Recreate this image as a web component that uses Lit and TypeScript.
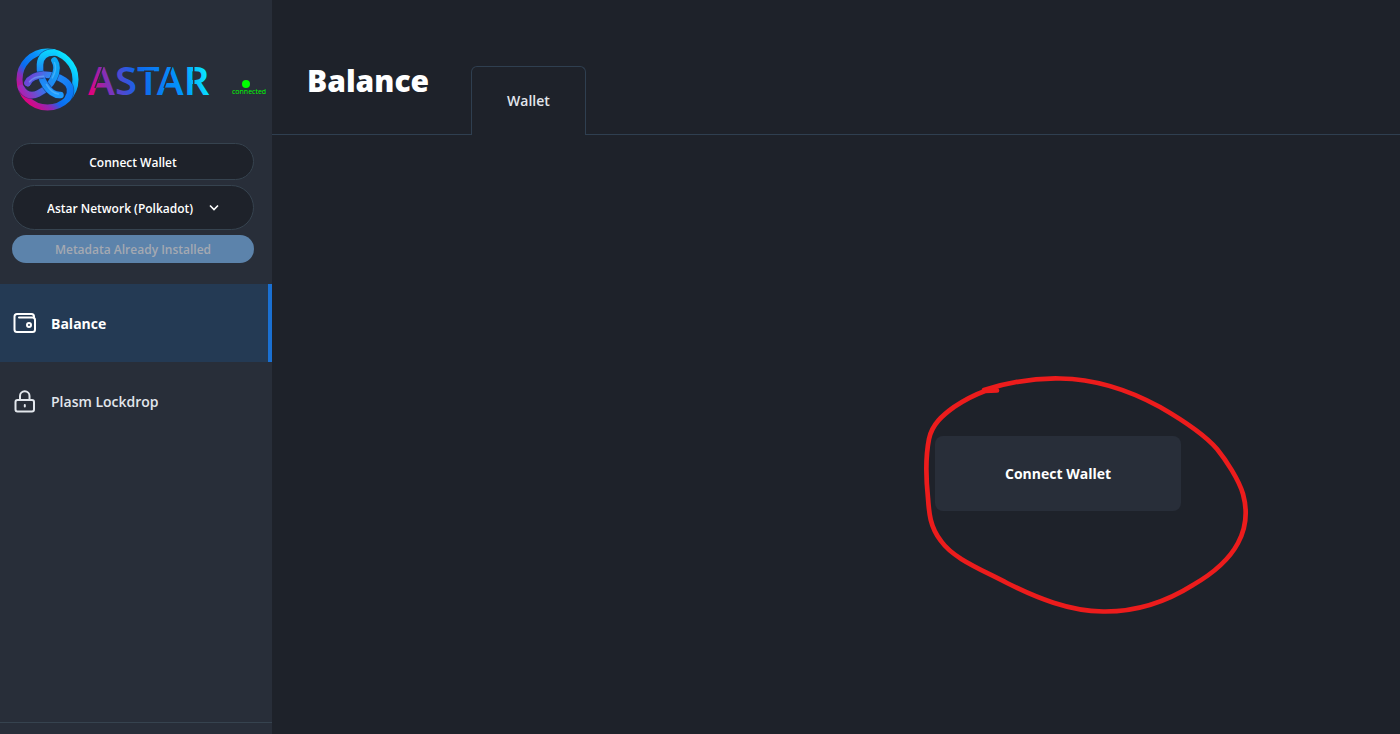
import { LitElement, html, svg, css } from "lit";
import { customElement } from "lit/decorators.js";

const STRAND = "M13 15.500C7 16 2 12 -2 6C-6 0 -8 -8 -7.500 -15C-7 -23 -2 -27 6 -27";
const TIP = "M13 15.500C7 16 2 12 -2 6";
const STRANDS = [
  { id: "violet", turn: 120 },
  { id: "pink", turn: 240 },
  { id: "cyan", turn: 0 },
];

@customElement("astar-logo")
class AstarLogo extends LitElement {
  static styles = css`
    :host { display: block; }
    svg { display: block; }
    .word { font: 600 40px "Noto Sans", "Open Sans", sans-serif; }
  `;
  render() {
    return html`<svg width="204" height="68" viewBox="0 0 204 68" role="img" aria-label="Astar">
      <defs>
        <linearGradient id="ring" x1="12" y1="56" x2="56" y2="14" gradientUnits="userSpaceOnUse">
          <stop offset="0" stop-color="#e6007a" /><stop offset=".25" stop-color="#8a2ab8" /><stop offset=".4" stop-color="#0a6cf0" /><stop offset=".65" stop-color="#0a8cfa" /><stop offset="1" stop-color="#0ae2ff" />
        </linearGradient>
        <linearGradient id="cyan" x1="0" y1="16" x2="0" y2="-28" gradientUnits="userSpaceOnUse">
          <stop offset="0" stop-color="#1c9cff" /><stop offset=".5" stop-color="#1f7cf0" /><stop offset="1" stop-color="#0ad2ff" />
        </linearGradient>
        <linearGradient id="violet" x1="0" y1="16" x2="0" y2="-28" gradientUnits="userSpaceOnUse">
          <stop offset="0" stop-color="#6b48d8" /><stop offset=".4" stop-color="#2a8cf5" /><stop offset="1" stop-color="#0a78f5" />
        </linearGradient>
        <linearGradient id="pink" x1="0" y1="16" x2="0" y2="-28" gradientUnits="userSpaceOnUse">
          <stop offset="0" stop-color="#0aa8f5" /><stop offset=".5" stop-color="#2a7cf0" /><stop offset="1" stop-color="#a624b4" />
        </linearGradient>
        <linearGradient id="word" x1="78" y1="50" x2="192" y2="24" gradientUnits="userSpaceOnUse">
          <stop offset="0" stop-color="#e6007a" /><stop offset=".2" stop-color="#703ac2" /><stop offset=".42" stop-color="#1066eb" /><stop offset=".8" stop-color="#0297fb" /><stop offset="1" stop-color="#0ae2ff" />
        </linearGradient>
      </defs>
      <circle cx="35.500" cy="34.500" r="28" fill="none" stroke="url(#ring)" stroke-width="6" />
      <g transform="translate(35.500 34.500)" fill="none" stroke-linecap="round">
        ${STRANDS.map(
          (s) => svg`<g transform="rotate(${s.turn})">
            <path d=${STRAND} stroke="#17306e" stroke-opacity=".6" stroke-width="8" stroke-linecap="butt" />
            <path d=${STRAND} stroke="url(#${s.id})" stroke-width="6.500" />
          </g>`
        )}
        <g transform="rotate(120)">
          <path d=${TIP} stroke="#17306e" stroke-opacity=".6" stroke-width="8" stroke-linecap="butt" />
          <path d=${TIP} stroke="url(#violet)" stroke-width="6.500" />
        </g>
        ${STRANDS.map(
          (s) => svg`<path transform="rotate(${s.turn})" d="M11 14.500C6 14 2 10 -1 5" stroke="#7fd0ff" stroke-opacity=".4" stroke-width="1.500" />`
        )}
      </g>
      <text class="word" x="76" y="50" fill="url(#word)">ASTAR</text>
      <path d="M83 43L91.500 20M132 26.300H142M152 43L160.500 20M181.700 20V51" stroke="#282e39" stroke-width="1.500" fill="none" />
    </svg>`;
  }
}

@customElement("app-root")
class AppRoot extends LitElement {
  static styles = css`
    :host {
      display: grid;
      grid-template-columns: 272px 1fr;
      min-height: 100vh;
      background: #1e222a;
      color: #fff;
      font: 600 14px/20px "Open Sans", "Noto Sans", sans-serif;
    }
    *, *::before { box-sizing: border-box; }
    button, select { font: inherit; color: inherit; cursor: pointer; }
    a { color: inherit; text-decoration: none; }
    .side { display: flex; flex-direction: column; background: #282e39; }
    .brand { display: flex; align-items: flex-end; padding: 45px 4px 30px 12px; }
    .status { display: flex; flex-direction: column; margin: 0 0 17px 16px; color: #0f0; font: 400 7px/8px "Open Sans", sans-serif; }
    .dot { width: 8px; height: 8px; margin-left: 10px; border-radius: 50%; background: #0f0; }
    .wallet { display: flex; flex-direction: column; gap: 5px; padding: 0 18px 21px 12px; font-size: 12px; }
    .pill { width: 100%; height: 37px; padding: 2px 6px 0; border: 1px solid #36434f; border-radius: 24px; background: #1e222a; text-align: center; }
    .network { display: grid; align-items: center; }
    .network > * { grid-area: 1 / 1; }
    .network select { appearance: none; height: 45px; padding: 2px 56px 0 34px; text-align: left; }
    .network svg { justify-self: end; margin-right: 34px; pointer-events: none; }
    .pill.meta { height: 28px; border: 0; background: #5c83ab; color: #a4a9b2; cursor: default; }
    .nav { display: flex; flex-direction: column; flex: 1; }
    .item { display: flex; align-items: center; gap: 14px; height: 78px; padding: 2px 13px 0; border-right: 4px solid transparent; color: #e2e6ec; }
    .item.active { background: #243a54; border-color: #1a70d2; color: #fff; font-weight: 700; }
    .foot { height: 12px; border-top: 1px solid #36434f; }
    .main { display: flex; flex-direction: column; min-width: 0; }
    .head { display: flex; align-items: flex-end; gap: 42px; padding: 60px 35px 0; border-bottom: 1px solid #2f3f50; }
    h1 { margin: 0 0 32px; font-size: 30px; line-height: 42px; font-weight: 800; }
    .tab { display: grid; place-items: center; height: 69px; padding: 0 35px; margin-bottom: -1px; border: 1px solid #2f3f50; border-bottom: 0; border-radius: 6px 6px 0 0; background: #1e222a; color: #e2e6ec; }
    .content { display: grid; place-items: center; flex: 1; padding: 78px 0 0 444px; }
    .callout { position: relative; }
    .connect { display: block; width: 246px; height: 75px; border: 0; border-radius: 8px; background: #282e39; font-weight: 700; }
    .mark { position: absolute; left: -25px; top: -71px; pointer-events: none; }
  `;
  render() {
    return html`
      <aside class="side">
        <div class="brand">
          <astar-logo></astar-logo>
          <div class="status"><i class="dot"></i><span>connected</span></div>
        </div>
        <div class="wallet">
          <button class="pill">Connect Wallet</button>
          <div class="network">
            <select class="pill" aria-label="Network"><option>Astar Network (Polkadot)</option></select>
            <svg width="12" height="12" viewBox="0 0 12 12" fill="none" stroke="#fff" stroke-width="1.600"><path d="M2 3.500L6 7.500L10 3.500" /></svg>
          </div>
          <button class="pill meta" disabled>Metadata Already Installed</button>
        </div>
        <nav class="nav">
          <a class="item active" href="#balance">
            <svg width="24" height="24" viewBox="0 0 24 24" fill="none" stroke="currentColor" stroke-width="2" stroke-linecap="round" stroke-linejoin="round">
              <path d="M21 5.500V4.500Q21 2 18.500 2H4Q1.500 2 1.500 4.500V17.500Q1.500 20 4 20H19.500Q22 20 22 17.500V8Q22 5.500 19.500 5.500H6" />
              <circle cx="16" cy="13" r="2" />
            </svg>
            <span>Balance</span>
          </a>
          <a class="item" href="#lockdrop">
            <svg width="24" height="24" viewBox="0 0 24 24" fill="none" stroke="currentColor" stroke-width="2" stroke-linecap="round" stroke-linejoin="round">
              <rect x="2.500" y="10" width="18.500" height="11.500" rx="2" />
              <path d="M7 10V6A4.700 4.700 0 0 1 16.500 6V10M11.800 15V16.500" />
            </svg>
            <span>Plasm Lockdrop</span>
          </a>
        </nav>
        <div class="foot"></div>
      </aside>
      <main class="main">
        <header class="head">
          <h1>Balance</h1>
          <a class="tab" href="#wallet">Wallet</a>
        </header>
        <section class="content">
          <div class="callout">
            <button class="connect">Connect Wallet</button>
            <svg class="mark" width="350" height="255" viewBox="0 0 350 255" fill="none" stroke="#ec1c1c" stroke-width="4.700" stroke-linecap="round" stroke-linejoin="round">
              <path d="M86 25L74 25C99 17 125 13 150 13.500C186 14 217 24 250 42C276 57 295 70 307 84C316 95 329 115 333 129C338 147 336 163 328 178C319 195 302 209 283 220C256 237 226 247 193 246.500C159 246 127 233 97 218C68 203 43 193 31 176C20 162 19 148 18 133C16 114 15 94 19 74C22 59 33 50 44 42C53 36 64 30 75 26L87 25.500" />
            </svg>
          </div>
        </section>
      </main>`;
  }
}
